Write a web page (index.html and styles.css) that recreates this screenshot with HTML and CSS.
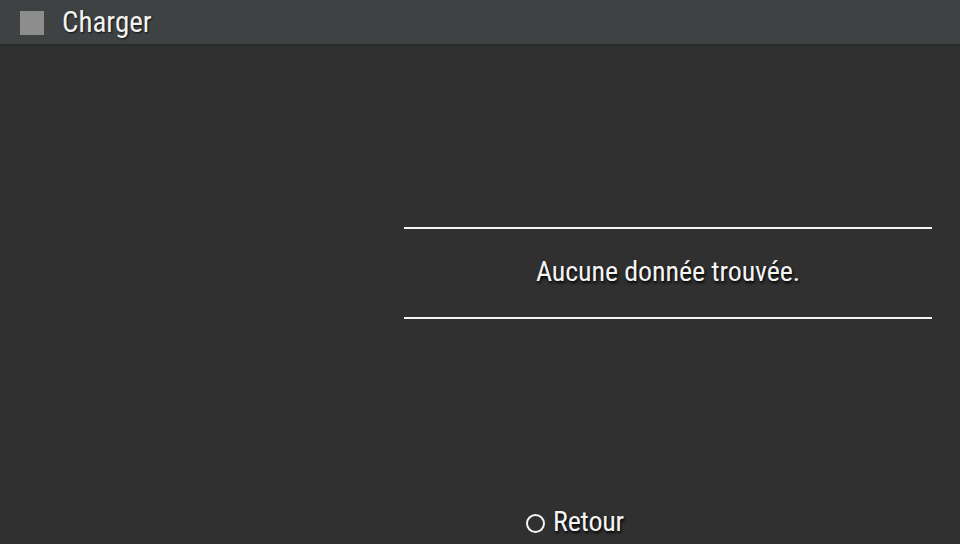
FILE: index.html
```html
<!DOCTYPE html>
<html>
<head>
<meta charset="utf-8">
<link rel="stylesheet" href="styles.css">
</head>
<body>
<div class="app">
  <header class="topbar">
    <span class="topbar-icon"></span>
    <span class="topbar-title">Charger</span>
  </header>
  <main class="content">
    <div class="left-pane"></div>
    <div class="right-pane">
      <div class="message-box">
        <span class="message">Aucune donnée trouvée.</span>
      </div>
    </div>
  </main>
  <footer class="footer">
    <span class="btn-circle"></span>
    <span class="footer-label">Retour</span>
  </footer>
</div>
</body>
</html>
```

FILE: styles.css
```css
html, body {
  margin: 0;
  padding: 0;
  width: 960px;
  height: 544px;
  overflow: hidden;
  background: #303030;
  font-family: "Roboto Condensed", Roboto, "Liberation Sans", sans-serif;
  color: #f4f4f4;
}
.app {
  display: flex;
  flex-direction: column;
  height: 544px;
}
.topbar {
  height: 44px;
  background: #3e4242;
  border-bottom: 2px solid #2a2c2c;
  display: flex;
  align-items: center;
  padding-left: 20px;
  box-sizing: content-box;
}
.topbar-icon {
  width: 24px;
  height: 24px;
  background: #8d8d8d;
  margin-right: 18px;
  margin-top: 2px;
}
.topbar-title {
  font-size: 29px;
  color: #f2f2f2;
  text-shadow: 1px 1px 2px #111;
}
.content {
  flex: 1;
  display: flex;
}
.left-pane {
  width: 404px;
}
.right-pane {
  width: 528px;
  display: flex;
  flex-direction: column;
  padding-top: 181px;
}
.message-box {
  border-top: 2px solid #f4f4f4;
  border-bottom: 2px solid #f4f4f4;
  height: 88px;
  box-sizing: border-box;
  height: 92px;
  padding-bottom: 3px;
  display: flex;
  align-items: center;
  justify-content: center;
}
.message {
  font-size: 28px;
  letter-spacing: -0.1px;
  text-shadow: 1px 2px 3px #000;
}
.footer {
  height: 46px;
  display: flex;
  align-items: center;
  padding-left: 526px;
}
.btn-circle {
  width: 15px;
  height: 15px;
  border: 2px solid #f4f4f4;
  border-radius: 50%;
  margin-right: 8px;
  margin-top: 4px;
}
.footer-label {
  font-size: 28px;
  letter-spacing: -0.2px;
  text-shadow: 1px 2px 3px #000;
}
```
